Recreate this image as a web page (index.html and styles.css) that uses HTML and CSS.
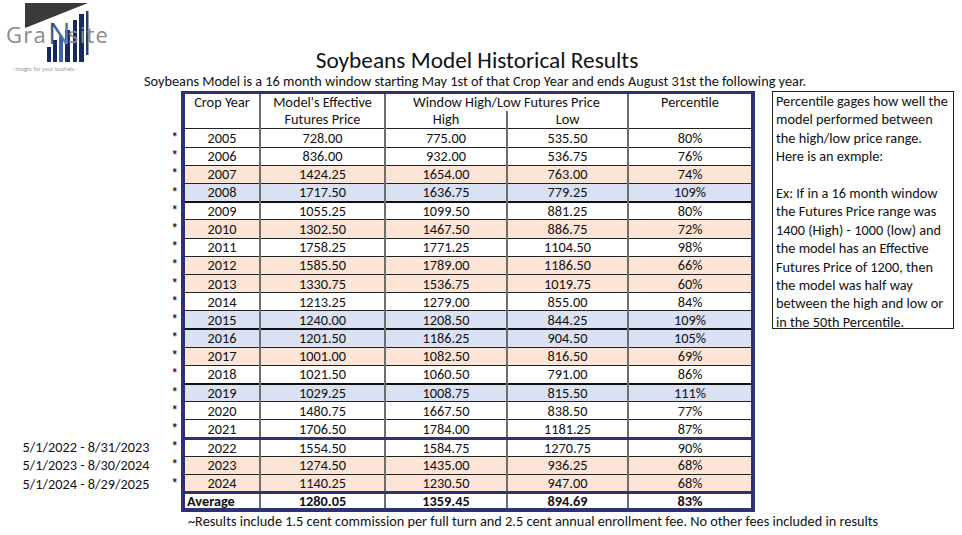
FILE: index.html
```html
<!DOCTYPE html>
<html lang="en">
<head>
<meta charset="utf-8">
<title>Soybeans Model Historical Results</title>
<link rel="stylesheet" href="styles.css">
</head>
<body>
<div class="page">
  <header class="top">
    <svg class="logo" width="120" height="78" viewBox="0 0 120 78" aria-label="GrainSite logo">
      <defs>
        <linearGradient id="ng" x1="0" y1="0" x2="1" y2="1">
          <stop offset="0" stop-color="#1f3a78"/>
          <stop offset="1" stop-color="#6d95cf"/>
        </linearGradient>
      </defs>
      <polygon points="25,3 88,3 25,28" fill="#3a3a3a"/>
      <rect x="47" y="47" width="4" height="15" fill="#172a5e"/>
      <rect x="53" y="40" width="4" height="22" fill="#172a5e"/>
      <rect x="59" y="36" width="4" height="26" fill="#3c64a8"/>
      <rect x="65" y="30" width="5" height="32" fill="#172a5e"/>
      <rect x="73" y="20" width="4" height="42" fill="#172a5e"/>
      <rect x="79" y="14" width="5" height="48" fill="#172a5e"/>
      <rect x="86" y="11" width="2.5" height="44" fill="#2a3a70"/>
      <text x="6" y="43" class="logo-grey">Gra</text>
      <text x="48" y="44" class="logo-n">N</text>
      <text x="68" y="43" class="logo-grey">site</text>
      <text x="12" y="71" class="logo-tag">- Insight for your bushels -</text>
    </svg>
    <div class="titles">
      <h1>Soybeans Model Historical Results</h1>
      <p class="sub">Soybeans Model is a 16 month window starting May 1st of that Crop Year and ends August 31st the following year.</p>
    </div>
  </header>

  <main class="main">
    <table class="results">
      <colgroup>
        <col class="c-date"><col class="c-star"><col class="c-crop"><col class="c-model"><col class="c-high"><col class="c-low"><col class="c-pct">
      </colgroup>
      <thead>
        <tr class="h1row">
          <th class="side" rowspan="2"></th><th class="side" rowspan="2"></th>
          <th class="first" rowspan="2">Crop Year</th>
          <th rowspan="2">Model's Effective<br>Futures Price</th>
          <th colspan="2">Window High/Low Futures Price</th>
          <th class="last" rowspan="2">Percentile</th>
        </tr>
        <tr class="h2row">
          <th class="nb">High</th>
          <th>Low</th>
        </tr>
      </thead>
      <tbody>
        <tr><td class="side"></td><td class="star">*</td><td class="first">2005</td><td>728.00</td><td>775.00</td><td>535.50</td><td class="last">80%</td></tr>
        <tr><td class="side"></td><td class="star">*</td><td class="first">2006</td><td>836.00</td><td>932.00</td><td>536.75</td><td class="last">76%</td></tr>
        <tr class="peach"><td class="side"></td><td class="star">*</td><td class="first">2007</td><td>1424.25</td><td>1654.00</td><td>763.00</td><td class="last">74%</td></tr>
        <tr class="lav"><td class="side"></td><td class="star">*</td><td class="first">2008</td><td>1717.50</td><td>1636.75</td><td class="sky">779.25</td><td class="last">109%</td></tr>
        <tr class="bold-top"><td class="side"></td><td class="star">*</td><td class="first">2009</td><td>1055.25</td><td>1099.50</td><td>881.25</td><td class="last">80%</td></tr>
        <tr class="peach"><td class="side"></td><td class="star">*</td><td class="first">2010</td><td>1302.50</td><td>1467.50</td><td>886.75</td><td class="last">72%</td></tr>
        <tr><td class="side"></td><td class="star">*</td><td class="first">2011</td><td>1758.25</td><td>1771.25</td><td>1104.50</td><td class="last">98%</td></tr>
        <tr class="peach"><td class="side"></td><td class="star">*</td><td class="first">2012</td><td>1585.50</td><td>1789.00</td><td>1186.50</td><td class="last">66%</td></tr>
        <tr class="peach"><td class="side"></td><td class="star">*</td><td class="first">2013</td><td>1330.75</td><td>1536.75</td><td>1019.75</td><td class="last">60%</td></tr>
        <tr><td class="side"></td><td class="star">*</td><td class="first">2014</td><td>1213.25</td><td>1279.00</td><td>855.00</td><td class="last">84%</td></tr>
        <tr class="lav"><td class="side"></td><td class="star">*</td><td class="first">2015</td><td>1240.00</td><td>1208.50</td><td>844.25</td><td class="last">109%</td></tr>
        <tr class="lav bold-top"><td class="side"></td><td class="star">*</td><td class="first">2016</td><td>1201.50</td><td>1186.25</td><td>904.50</td><td class="last">105%</td></tr>
        <tr class="peach"><td class="side"></td><td class="star">*</td><td class="first">2017</td><td>1001.00</td><td>1082.50</td><td>816.50</td><td class="last">69%</td></tr>
        <tr><td class="side"></td><td class="star">*</td><td class="first">2018</td><td>1021.50</td><td>1060.50</td><td>791.00</td><td class="last">86%</td></tr>
        <tr class="lav bold-top"><td class="side"></td><td class="star">*</td><td class="first">2019</td><td>1029.25</td><td class="sky">1008.75</td><td>815.50</td><td class="last">111%</td></tr>
        <tr class="light-top"><td class="side"></td><td class="star">*</td><td class="first">2020</td><td>1480.75</td><td>1667.50</td><td>838.50</td><td class="last">77%</td></tr>
        <tr><td class="side"></td><td class="star">*</td><td class="first">2021</td><td>1706.50</td><td>1784.00</td><td>1181.25</td><td class="last">87%</td></tr>
        <tr class="navy-top"><td class="side date">5/1/2022 - 8/31/2023</td><td class="star">*</td><td class="first">2022</td><td>1554.50</td><td>1584.75</td><td>1270.75</td><td class="last">90%</td></tr>
        <tr class="peach no-top"><td class="side date">5/1/2023 - 8/30/2024</td><td class="star">*</td><td class="first">2023</td><td>1274.50</td><td>1435.00</td><td>936.25</td><td class="last">68%</td></tr>
        <tr class="peach no-top"><td class="side date">5/1/2024 - 8/29/2025</td><td class="star">*</td><td class="first">2024</td><td>1140.25</td><td>1230.50</td><td>947.00</td><td class="last">68%</td></tr>
        <tr class="avg"><td class="side"></td><td class="side"></td><td class="first avg-label">Average</td><td>1280.05</td><td>1359.45</td><td>894.69</td><td class="last">83%</td></tr>
      </tbody>
    </table>

    <aside class="note">Percentile gages how well the<br>model performed between<br>the high/low price range.<br>Here is an exmple:<br><br>Ex: If in a 16 month window<br>the Futures Price range was<br>1400 (High) - 1000 (low) and<br>the model has an Effective<br>Futures Price of 1200, then<br>the model was half way<br>between the high and low or<br>in the 50th Percentile.</aside>
  </main>

  <p class="foot">~Results include 1.5 cent commission per full turn and 2.5 cent annual enrollment fee. No other fees included in results</p>
</div>
</body>
</html>
```

FILE: styles.css
```css
* { box-sizing: border-box; }

html, body {
  margin: 0;
  padding: 0;
  background: #ffffff;
}

body {
  font-family: Carlito, Lato, "Liberation Sans", sans-serif;
  color: #111111;
  width: 962px;
  height: 535px;
  overflow: hidden;
}

.page {
  width: 962px;
}

/* ---------- header ---------- */
.top {
  display: grid;
  height: 91px;
}

.logo,
.titles {
  grid-area: 1 / 1;
}

.logo {
  align-self: start;
  justify-self: start;
}

.logo-grey {
  font-family: "Open Sans", Lato, sans-serif;
  font-size: 22px;
  letter-spacing: 1.2px;
  font-weight: 400;
  fill: #8a8a8a;
}

.logo-n {
  font-family: "Open Sans", Lato, sans-serif;
  font-size: 30px;
  font-weight: 400;
  fill: url(#ng);
}

.logo-tag {
  font-family: "Open Sans", Lato, sans-serif;
  font-size: 5.4px;
  fill: #8a8a8a;
}

.titles {
  padding-top: 47px;
  text-align: center;
  padding-right: 8px;
}

.titles h1 {
  margin: 0;
  font-size: 23.3px;
  line-height: 26px;
  font-weight: 400;
  color: #111;
}

.sub {
  margin: 0;
  font-size: 14.3px;
  line-height: 16px;
  padding-right: 4px;
}

/* ---------- main ---------- */
.main {
  display: flex;
  align-items: flex-start;
}

.results {
  border-collapse: collapse;
  table-layout: fixed;
  width: 753px;
  font-size: 14.3px;
}

.c-date { width: 170px; }
.c-star { width: 13px; }
.c-crop { width: 77px; }
.c-model { width: 125px; }
.c-high { width: 122px; }
.c-low { width: 121px; }
.c-pct { width: 125px; }

.results th,
.results td {
  padding: 0;
  text-align: center;
  font-weight: 400;
  white-space: nowrap;
  border-left: 2px solid #6e6e6e;
  border-right: 2px solid #6e6e6e;
  border-top: 1px solid #222;
  border-bottom: 1px solid #222;
}

.results th {
  vertical-align: top;
  line-height: 17.2px;
}

.results .h1row th {
  border-top: 3px solid #2e3175;
  border-bottom: none;
  height: 16px;
}

.results .h2row th {
  border-top: none;
  border-bottom: 1px solid #222;
  height: 15px;
}

.results td {
  height: 18.2px;
  line-height: 16px;
}

.results .side,
.results .star {
  border: none;
  background: #fff;
}

.results .h1row th.side {
  border: none;
}

.results .star {
  text-align: right;
  padding-right: 3px;
  font-size: 13px;
  font-weight: 700;
  vertical-align: middle;
  line-height: 14px;
}

.results .date {
  font-size: 14.3px;
  text-align: center;
  padding-left: 2px;
}

.results .first {
  border-left: 4px solid #2e3175;
}

.results .last {
  border-right: 4px solid #2e3175;
}

.peach td:not(.side):not(.star) { background: #fce4d6; }
.lav td:not(.side):not(.star) { background: #d9e1f2; }
.results td.sky { background: #ddebf7; }

.bold-top td:not(.side):not(.star) { border-top: 2px solid #111; }
.light-top td:not(.side):not(.star) { border-top: 1px solid #a9a9a9; }
.navy-top td:not(.side):not(.star) { border-top: 3px solid #2e3175; }
.no-top td:not(.side):not(.star) { border-top: none; }

.results .avg td {
  height: auto;
  line-height: 14px;
}

.avg td:not(.side) {
  font-weight: 700;
  border-top: 3px solid #2e3175;
  border-bottom: 4px solid #2e3175;
}

.results .avg-label {
  text-align: left;
  padding-left: 2px;
}

/* ---------- note ---------- */
.note {
  margin-left: 17px;
  width: 182px;
  height: 238px;
  border: 1px solid #222;
  padding: 0 3px;
  font-size: 14.3px;
  line-height: 18.4px;
  white-space: nowrap;
}

/* ---------- footer ---------- */
.foot {
  margin: 2px 0 0 188px;
  font-size: 14.3px;
  line-height: 15px;
}
```
